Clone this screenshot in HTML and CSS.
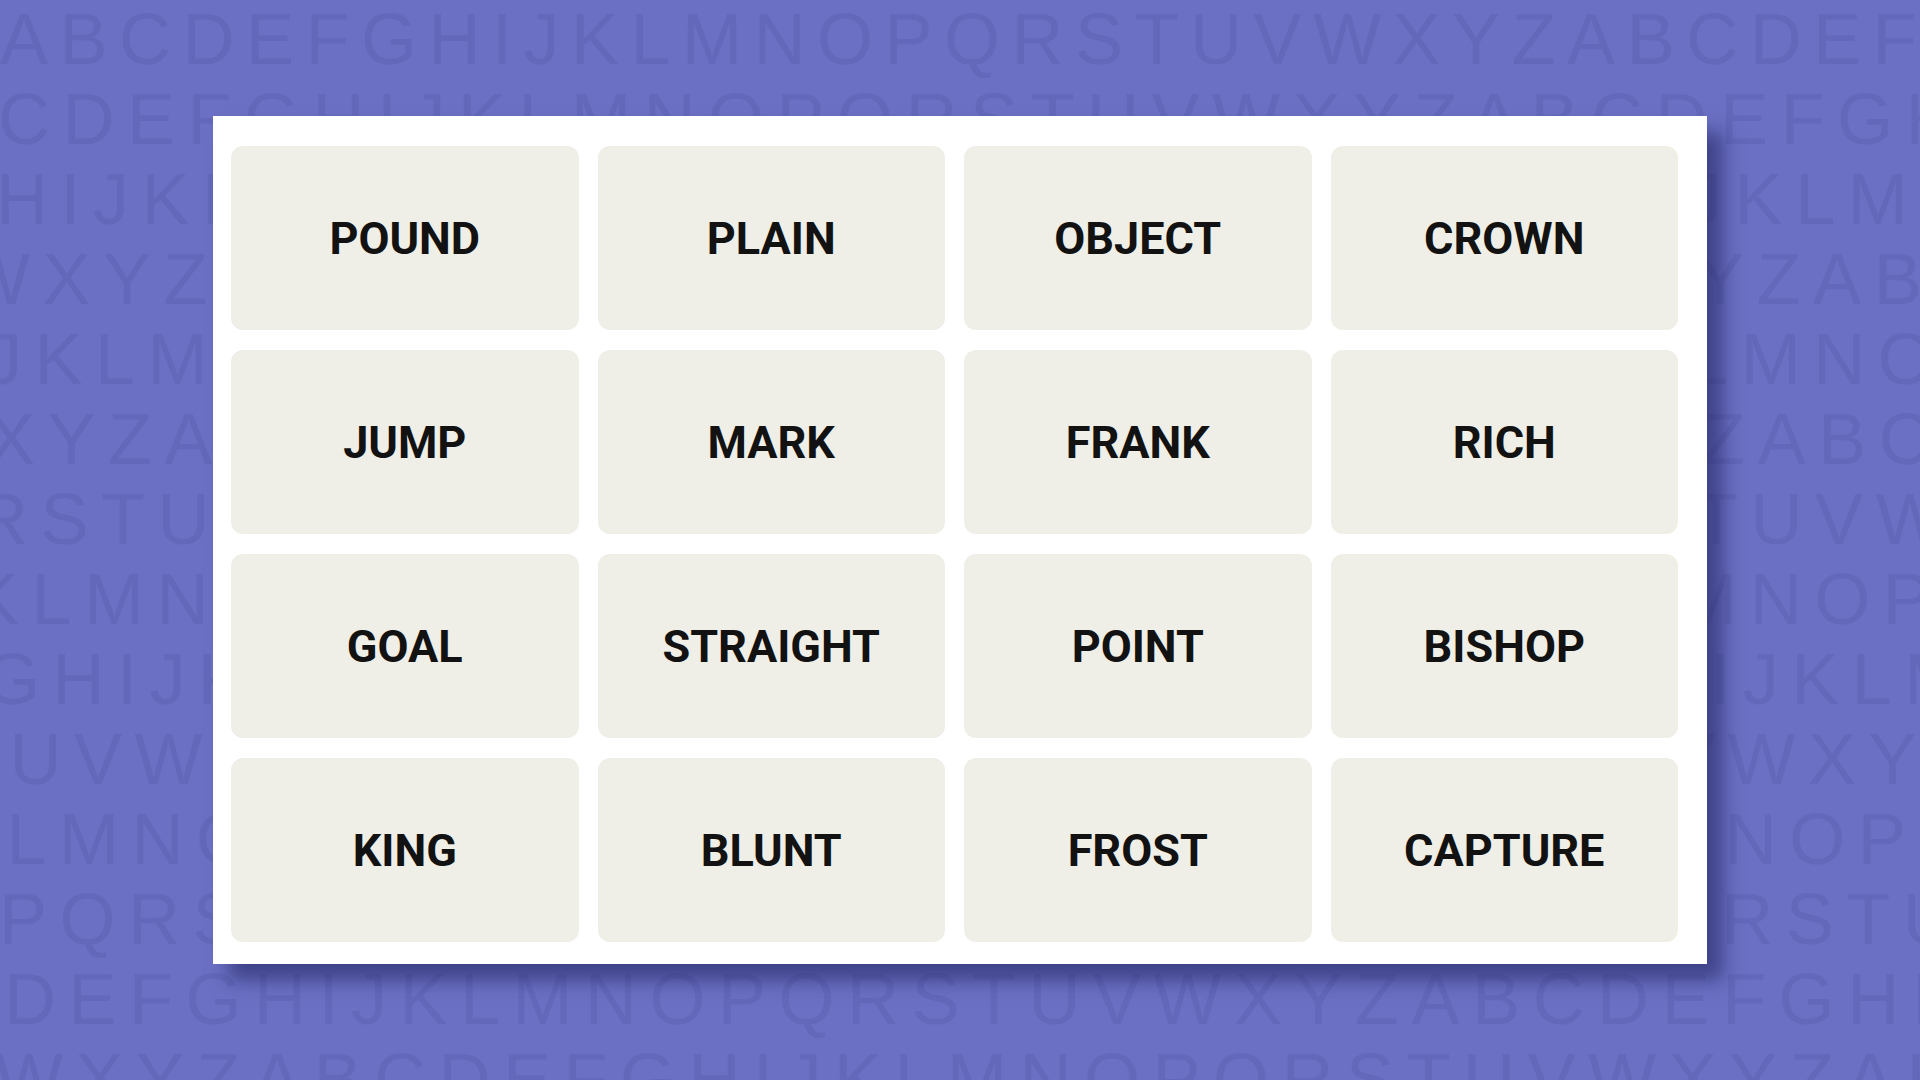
FILE: index.html
```html
<!DOCTYPE html>
<html lang="en">
<head>
<meta charset="utf-8">
<title>Connections</title>
<link rel="stylesheet" href="styles.css">
</head>
<body>
<div class="stage">
  <div class="letters" aria-hidden="true">
    <div class="row">ABCDEFGHIJKLMNOPQRSTUVWXYZABCDEFGH</div>
    <div class="row">CDEFGHIJKLMNOPQRSTUVWXYZABCDEFGHIJ</div>
    <div class="row">HIJKLMNOPQRSTUVWXYZABCDEFGHIJKLMNO</div>
    <div class="row">WXYZABCDEFGHIJKLMNOPQRSTUVWXYZABCD</div>
    <div class="row">JKLMNOPQRSTUVWXYZABCDEFGHIJKLMNOPQ</div>
    <div class="row">XYZABCDEFGHIJKLMNOPQRSTUVWXYZABCDE</div>
    <div class="row">RSTUVWXYZABCDEFGHIJKLMNOPQRSTUVWXY</div>
    <div class="row">KLMNOPQRSTUVWXYZABCDEFGHIJKLMNOPQR</div>
    <div class="row">GHIJKLMNOPQRSTUVWXYZABCDEFGHIJKLMN</div>
    <div class="row">TUVWXYZABCDEFGHIJKLMNOPQRSTUVWXYZA</div>
    <div class="row">KLMNOPQRSTUVWXYZABCDEFGHIJKLMNOPQR</div>
    <div class="row">PQRSTUVWXYZABCDEFGHIJKLMNOPQRSTUVW</div>
    <div class="row">DEFGHIJKLMNOPQRSTUVWXYZABCDEFGHIJK</div>
    <div class="row">WXYZABCDEFGHIJKLMNOPQRSTUVWXYZABCD</div>
  </div>
  <div class="panel">
    <div class="card">POUND</div>
    <div class="card">PLAIN</div>
    <div class="card">OBJECT</div>
    <div class="card">CROWN</div>
    <div class="card">JUMP</div>
    <div class="card">MARK</div>
    <div class="card">FRANK</div>
    <div class="card">RICH</div>
    <div class="card">GOAL</div>
    <div class="card">STRAIGHT</div>
    <div class="card">POINT</div>
    <div class="card">BISHOP</div>
    <div class="card">KING</div>
    <div class="card">BLUNT</div>
    <div class="card">FROST</div>
    <div class="card">CAPTURE</div>
  </div>
</div>
</body>
</html>
```
FILE: styles.css
```css
html, body {
  margin: 0;
  padding: 0;
}
body {
  background: #6b70c4;
  overflow: hidden;
}
.stage {
  position: relative;
  width: 1920px;
  height: 1080px;
  overflow: hidden;
  display: flow-root;
}
.letters {
  position: absolute;
  inset: 0;
  margin-top: -1px;
  font-family: "Liberation Sans", Arial, sans-serif;
  font-size: 72px;
  line-height: 80px;
  letter-spacing: 12.5px;
  color: #6368ba;
  white-space: nowrap;
}
.row:nth-child(1) { margin-left: 0; letter-spacing: 11.5px; }
.row:nth-child(2) { margin-left: -2px; }
.row:nth-child(3) { margin-left: -4px; }
.row:nth-child(4) { margin-left: -38px; }
.row:nth-child(5) { margin-left: -14px; }
.row:nth-child(6) { margin-left: -13px; }
.row:nth-child(7) { margin-left: -24px; }
.row:nth-child(8) { margin-left: -29px; }
.row:nth-child(9) { margin-left: -16px; }
.row:nth-child(10) { margin-left: -47px; }
.row:nth-child(11) { margin-left: -54px; }
.row:nth-child(12) { margin-left: -1px; }
.row:nth-child(13) { margin-left: 4px; }
.row:nth-child(14) { margin-left: -5px; }

.panel {
  position: relative;
  margin: 116px 0 0 213px;
  width: 1494px;
  height: 848px;
  box-sizing: border-box;
  padding: 30px 29px 22px 18px;
  background: #ffffff;
  box-shadow: 16px 16px 18px rgba(34, 36, 96, 0.6);
  display: grid;
  grid-template-columns: repeat(4, 1fr);
  grid-template-rows: repeat(4, 184px);
  gap: 20px 19px;
}
.card {
  background: #efeee7;
  border-radius: 12px;
  display: flex;
  align-items: center;
  justify-content: center;
  font-family: Roboto, "Liberation Sans", sans-serif;
  font-weight: 700;
  font-size: 45px;
  color: #121212;
}
```
